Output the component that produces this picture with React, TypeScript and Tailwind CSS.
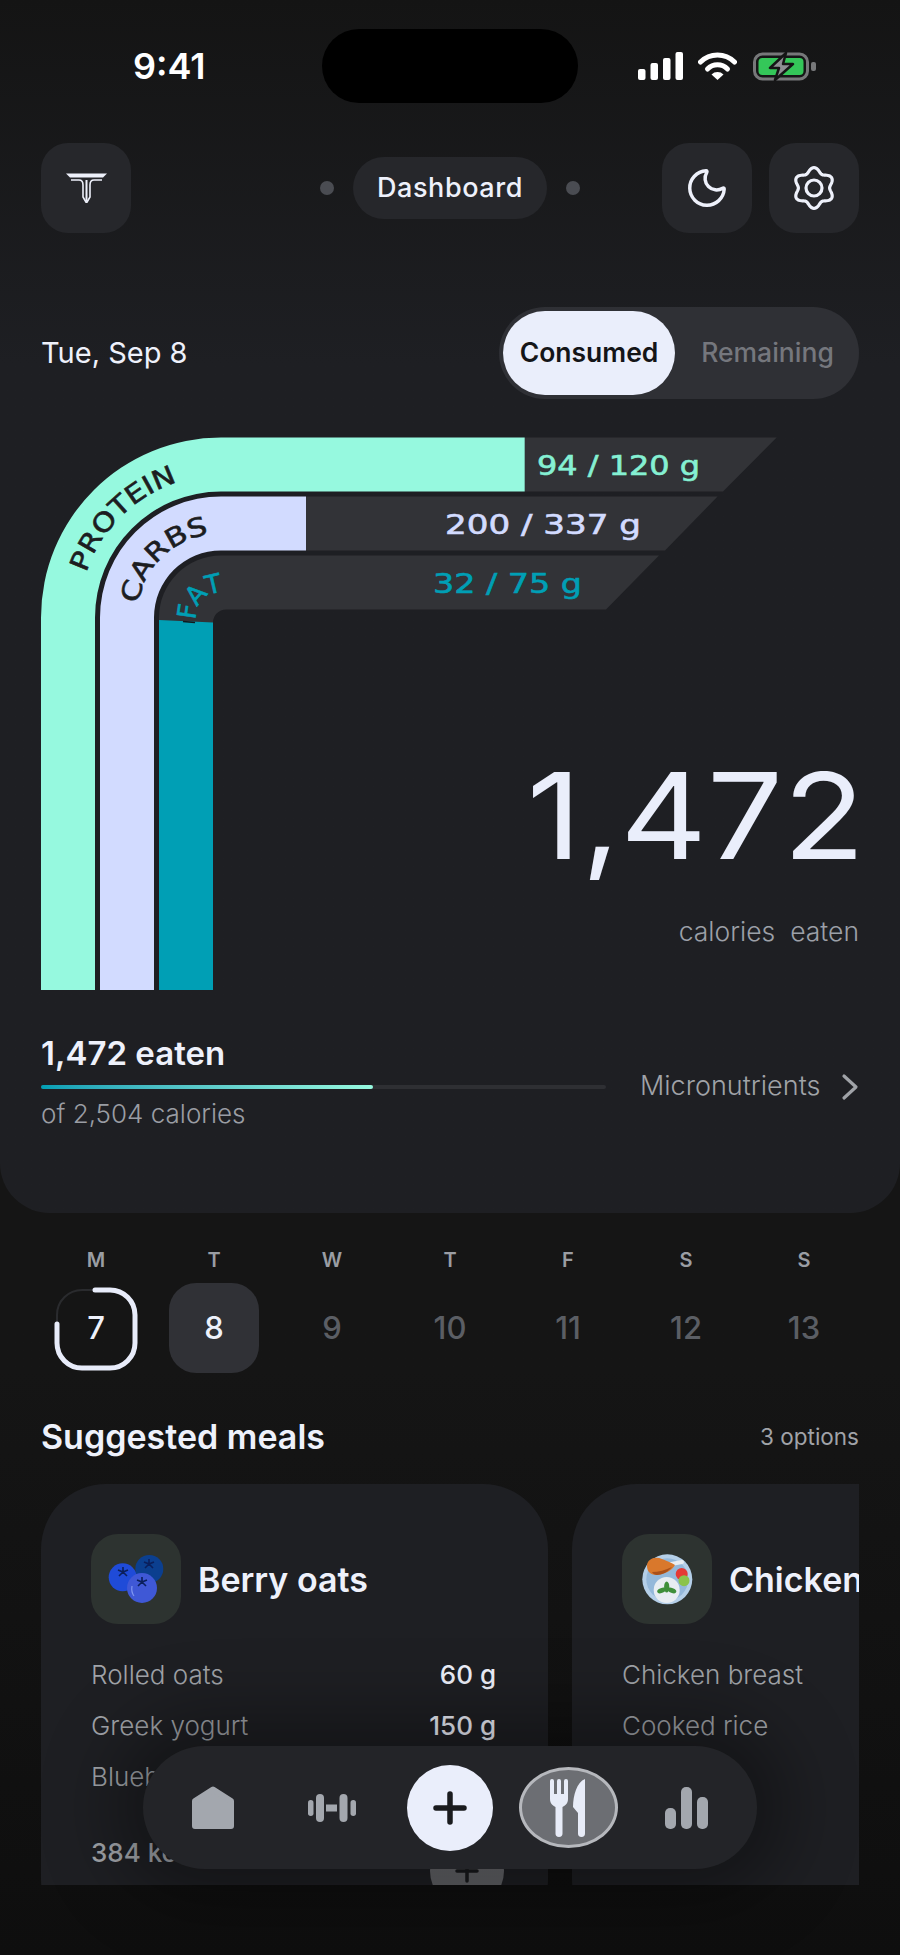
import React from 'react';
import { Moon } from 'lucide-react';

const days = [
  { label: 'M', num: '7' },
  { label: 'T', num: '8' },
  { label: 'W', num: '9' },
  { label: 'T', num: '10' },
  { label: 'F', num: '11' },
  { label: 'S', num: '12' },
  { label: 'S', num: '13' },
];

// six lobed gear outline
const gearPath =
  Array.from({ length: 120 }, (_, i) => {
    const t = (i / 120) * Math.PI * 2;
    const r = 18 + 2.4 * Math.cos(6 * t);
    return `${i === 0 ? 'M' : 'L'}${(22 + r * Math.sin(t)).toFixed(2)} ${(22 - r * Math.cos(t)).toFixed(2)}`;
  }).join(' ') + ' Z';

const StatusIcons = () => (
  <div className="flex items-center pl-[60px]">
    <svg width="45" height="28" viewBox="0 0 45 28" fill="#fff">
      <rect x="0" y="17" width="7.5" height="11" rx="2" />
      <rect x="12.5" y="11" width="7.5" height="17" rx="2" />
      <rect x="25" y="6" width="7.5" height="22" rx="2" />
      <rect x="37.5" y="0" width="7.5" height="28" rx="2" />
    </svg>
    <svg className="ml-[15px]" width="39" height="28" viewBox="0 0 39 28" fill="none">
      <path d="M2.5 10 A24 24 0 0 1 36.5 10" stroke="#fff" strokeWidth="5" strokeLinecap="round" />
      <path d="M9.5 17 A14 14 0 0 1 29.5 17" stroke="#fff" strokeWidth="5" strokeLinecap="round" />
      <path d="M19.5 28 L13.5 22.5 A8.5 8.5 0 0 1 25.5 22.5 Z" fill="#fff" />
    </svg>
    <svg className="ml-[16px]" width="64" height="29" viewBox="0 0 64 29" fill="none">
      <rect x="1.5" y="2" width="53" height="25" rx="8" stroke="#77787a" strokeWidth="3" />
      <rect x="5.5" y="6" width="45" height="17" rx="4" fill="#34c759" />
      <rect x="58" y="10" width="5" height="9" rx="2" fill="#77787a" />
      <path d="M33 1 L17 16 H26 L22 28 L40 12 H30 Z" fill="#8e8e93" stroke="#151515" strokeWidth="2.5" strokeLinejoin="round" />
    </svg>
  </div>
);

const Logo = () => (
  <svg width="41" height="30" viewBox="0 0 41 30" fill="none" stroke="#eef1fb" strokeWidth="1.6">
    <path d="M0 0.5H41L37 4.5H4Z" fill="#eef1fb" strokeWidth="0" />
    <path d="M5 7 H13 C16 7 17 9 17 12 V24 L20.5 30 L24 24 V12 C24 9 25 7 28 7 H36" />
    <path d="M20.5 7 V28" strokeWidth="2" />
  </svg>
);

const MacroChart = () => (
  <svg className="absolute left-0 top-0" width="900" height="553" viewBox="0 437 900 553">
    <path d="M524.7 437.5 H776.7 L723 491.5 H524.7Z" fill="#323337" />
    <path d="M41 990 V617.5 A180 180 0 0 1 221 437.5 H524.7 V491.5 H221 A126 126 0 0 0 95 617.5 V990Z" fill="#96f9df" />
    <path d="M306 496.5 H717.6 L665 550.5 H306Z" fill="#323337" />
    <path d="M100 990 V617.5 A121 121 0 0 1 221 496.5 H306 V550.5 H221 A67 67 0 0 0 154 617.5 V990Z" fill="#d2dbff" />
    <path d="M159 621 V617.5 A62 62 0 0 1 221 555.5 H659 L606 609.5 H226 A13 13 0 0 0 213 622.5 V624Z" fill="#323337" />
    <path d="M159 620 L213 622.5 V990 H159Z" fill="#009fb5" />

    <path id="protein-arc" d="M86.3 572.7 A142 142 0 0 1 221 475.5" fill="none" />
    <path id="carbs-arc" d="M138.1 604.1 A84 84 0 0 1 221 533.5" fill="none" />
    <path id="fat-arc" d="M196 620 A25 25 0 0 1 232 595" fill="none" />

    <g className="font-['DejaVu_Sans',sans-serif] text-[26px]" strokeWidth="0.6">
      <text fill="#1c1d21" stroke="#1c1d21">
        <textPath href="#protein-arc" textLength="133" lengthAdjust="spacingAndGlyphs">PROTEIN</textPath>
      </text>
      <text fill="#1c1d21" stroke="#1c1d21">
        <textPath href="#carbs-arc" textLength="106" lengthAdjust="spacingAndGlyphs">CARBS</textPath>
      </text>
      <text fill="#009fb5" stroke="#009fb5">
        <textPath href="#fat-arc" textLength="44" lengthAdjust="spacingAndGlyphs">FAT</textPath>
      </text>
      <text x="537" y="475" fill="#85f0d3" stroke="#85f0d3" textLength="163" lengthAdjust="spacingAndGlyphs">94 / 120 g</text>
      <text x="445" y="534" fill="#d2dbff" stroke="#d2dbff" textLength="196" lengthAdjust="spacingAndGlyphs">200 / 337 g</text>
      <text x="433" y="593" fill="#009fb5" stroke="#009fb5" textLength="149" lengthAdjust="spacingAndGlyphs">32 / 75 g</text>
    </g>
    <path d="M183 621.5 L195 622.5" stroke="#10191d" strokeWidth="1.5" />
  </svg>
);

const DayCell = ({ label, num, index }: { label: string; num: string; index: number }) => (
  <div className="flex flex-col items-center">
    <span className="text-[20px] leading-[24px] font-semibold text-[#9a9da3]">{label}</span>
    <div
      className={`mt-[11px] w-[90px] h-[90px] rounded-[27px] flex items-center justify-center relative text-[31px] font-medium ${
        index === 1 ? 'bg-[#303136] text-[#eef1fb]' : index === 0 ? 'text-[#eef1fb]' : 'text-[#5b5e64]'
      }`}
    >
      {index === 0 && (
        <svg className="absolute left-[3px] top-[4px]" width="84" height="84" viewBox="0 0 84 84" fill="none">
          <path d="M3 37 V28 A25 25 0 0 1 28 3 H41" stroke="#2a2b2e" strokeWidth="2" />
          <path d="M41 3 H56 A25 25 0 0 1 81 28 V56 A25 25 0 0 1 56 81 H28 A25 25 0 0 1 3 56 V37" stroke="#e8ecfa" strokeWidth="5" strokeLinecap="round" />
        </svg>
      )}
      {num}
    </div>
  </div>
);

const BerryIcon = () => (
  <svg width="90" height="90" viewBox="0 0 90 90">
    <circle cx="58.3" cy="35" r="14" fill="#0b3f8f" />
    <path d="M58 30 L53 28 M58 30 L63 28 M58 30 V25 M58 30 L54 34 M58 30 L62 34" stroke="#0a1f5c" strokeWidth="1.6" />
    <circle cx="31.7" cy="43.3" r="14" fill="#1f4bd8" />
    <path d="M32 38 L27 36 M32 38 L37 36 M32 38 V33 M32 38 L28 42 M32 38 L36 42" stroke="#0a1f5c" strokeWidth="1.6" />
    <circle cx="51" cy="54" r="15" fill="#3f58d6" />
    <path d="M51 48 L46 46 M51 48 L56 46 M51 48 V43 M51 48 L47 52 M51 48 L55 52" stroke="#0a1f5c" strokeWidth="1.6" />
    <path d="M41 52 Q40 58 43 62" stroke="#7f96f0" strokeWidth="1.2" fill="none" />
  </svg>
);

const PlateIcon = () => (
  <svg width="90" height="90" viewBox="0 0 90 90">
    <circle cx="45.3" cy="45.3" r="25" fill="#b4cfe8" />
    <circle cx="45.3" cy="45.3" r="21" fill="#94b8da" />
    <path d="M44 31 L60 28" stroke="#e8edf2" strokeWidth="4" strokeLinecap="round" />
    <path d="M25 32 C25 25 33 22 40 25 C45 27 50 29 53 31 C50 37 42 40 35 41 C29 41 25 38 25 32Z" fill="#d9782c" />
    <path d="M30 38 C36 38 44 36 50 33 C46 38 40 41 35 41 C33 41 31 40 30 38Z" fill="#a9501a" />
    <circle cx="59.7" cy="40" r="6" fill="#e53935" />
    <circle cx="62" cy="46.7" r="5.5" fill="#8bc34a" />
    <circle cx="44.7" cy="56" r="13" fill="#e8edf2" />
    <ellipse cx="44.7" cy="53" rx="2.6" ry="5.5" fill="#3f8f3a" />
    <ellipse cx="39.5" cy="56.5" rx="4.5" ry="2.4" transform="rotate(-20 39.5 56.5)" fill="#3f8f3a" />
    <ellipse cx="50" cy="56.5" rx="4.5" ry="2.4" transform="rotate(20 50 56.5)" fill="#3f8f3a" />
  </svg>
);

const MealCard = ({
  title,
  icon,
  rows,
  kcal,
}: {
  title: string;
  icon: React.ReactNode;
  rows: [string, string][];
  kcal: string;
}) => (
  <div className="w-[507px] h-[460px] shrink-0 rounded-[65px] bg-[#1e1f23] pt-[50px] pl-[50px] pr-[52px]">
    <div className="flex items-center gap-[17px]">
      <div className="w-[90px] h-[90px] rounded-[27px] bg-[#2d3330]">{icon}</div>
      <span className="text-[34px] font-semibold text-[#eef1fb] whitespace-nowrap">{title}</span>
    </div>
    <div className="mt-[25px]">
      {rows.map(([name, amount]) => (
        <div key={name} className="flex justify-between items-center h-[51px] text-[26px]">
          <span className="text-[#a0a3a8] font-light">{name}</span>
          <span className="font-medium text-[#eef1fb]">{amount}</span>
        </div>
      ))}
    </div>
    <div className="mt-[32px] flex justify-between items-start">
      <span className="text-[26px] leading-[38px] font-medium text-[#a0a3a8]">{kcal}</span>
      <div className="-mr-[8px] w-[74px] h-[74px] rounded-full bg-gradient-to-b from-[#7a7b7f] to-[#55565a] flex items-center justify-center">
        <svg width="24" height="24" viewBox="0 0 24 24" stroke="#1a1b1e" strokeWidth="3.5" strokeLinecap="round">
          <path d="M2 12 H22 M12 2 V22" />
        </svg>
      </div>
    </div>
  </div>
);

const BottomNav = () => (
  <div className="absolute left-[143px] top-[1746px] w-[614px] h-[123px] rounded-full bg-[#232428] shadow-[0_0_70px_30px_rgba(0,0,0,0.35)] grid grid-cols-5 px-[11px] items-center justify-items-center">
    <svg width="42" height="43" viewBox="0 0 42 43" fill="#a3a7ae" stroke="#a3a7ae" strokeWidth="6" strokeLinejoin="round">
      <path d="M21 3.5 L39 15 V40 H3 V15 Z" />
    </svg>
    <svg width="48" height="28" viewBox="0 0 48 28" fill="#a3a7ae">
      <rect x="0" y="6" width="5.5" height="16" rx="2.7" />
      <rect x="8" y="0" width="8" height="28" rx="4" />
      <rect x="18" y="10.5" width="11" height="7" />
      <rect x="31.5" y="0" width="8" height="28" rx="4" />
      <rect x="42.5" y="6" width="5.5" height="16" rx="2.7" />
    </svg>
    <div className="w-[86px] h-[86px] rounded-full bg-[#eaeefb] flex items-center justify-center">
      <svg width="34" height="34" viewBox="0 0 34 34" stroke="#1a1b1e" strokeWidth="5.5" strokeLinecap="round">
        <path d="M3 17 H31 M17 3 V31" />
      </svg>
    </div>
    <div className="w-[99px] h-[81px] rounded-[50%] bg-[#6c6e73] border-[3px] border-[#b6b8bd] flex items-center justify-center">
      <svg width="36" height="58" viewBox="0 0 36 58" fill="#e8ecf8">
        <rect x="0" y="0" width="4" height="20" rx="2" />
        <rect x="7" y="0" width="4" height="20" rx="2" />
        <rect x="14" y="0" width="4" height="20" rx="2" />
        <path d="M0 15 H18 V20 C18 25 14.5 27 12.5 28 V54.5 a3.5 3.5 0 0 1 -7 0 V28 C3.5 27 0 25 0 20Z" />
        <path d="M35 0 C27 3 23 16 23 28 L28 34 V54.5 a3.5 3.5 0 0 0 7 0 Z" />
      </svg>
    </div>
    <svg width="43" height="42" viewBox="0 0 43 42" fill="#a3a7ae">
      <rect x="0" y="21" width="11" height="21" rx="5" />
      <rect x="16" y="0" width="11" height="42" rx="5" />
      <rect x="32" y="10" width="11" height="32" rx="5" />
    </svg>
  </div>
);

const App: React.FC = () => {
  return (
    <div className="relative w-[900px] h-[1955px] overflow-hidden bg-gradient-to-b from-[#151515] from-70% to-[#0e0e0e] font-['Inter',sans-serif]">
      {/* Top panel */}
      <section className="h-[1213px] rounded-b-[50px] bg-gradient-to-b from-[#141414] to-[#1e1f23] to-30%">
        {/* Status bar */}
        <div className="flex items-center pt-[29px]">
          <div className="w-[322px] pl-[133px] text-[36px] font-semibold text-white">9:41</div>
          <div className="w-[256px] h-[74px] rounded-full bg-black" />
          <StatusIcons />
        </div>

        {/* Header */}
        <header className="mt-[40px] px-[41px] flex items-center">
          <div className="w-[90px] h-[90px] rounded-[27px] bg-[#26272b] flex items-center justify-center">
            <Logo />
          </div>
          <div className="ml-[189px] w-[14px] h-[14px] rounded-full bg-[#4a4c52]" />
          <div className="ml-[19px] w-[194px] h-[62px] rounded-full bg-[#26272b] flex items-center justify-center text-[27px] tracking-[0.6px] font-medium text-[#eef1fb]">
            Dashboard
          </div>
          <div className="ml-[19px] w-[14px] h-[14px] rounded-full bg-[#4a4c52]" />
          <div className="ml-auto flex gap-[17px]">
            <div className="w-[90px] h-[90px] rounded-[27px] bg-[#26272b] flex items-center justify-center">
              <Moon size={46} strokeWidth={1.8} className="text-[#eef1fb]" />
            </div>
            <div className="w-[90px] h-[90px] rounded-[27px] bg-[#26272b] flex items-center justify-center">
              <svg width="44" height="44" viewBox="0 0 44 44" fill="none" stroke="#eef1fb" strokeWidth="3.2">
                <path d={gearPath} strokeLinejoin="round" />
                <circle cx="22" cy="22" r="8" />
              </svg>
            </div>
          </div>
        </header>

        {/* Date and toggle */}
        <div className="mt-[74px] px-[41px] flex items-center justify-between">
          <span className="text-[29px] text-[#eef1fb]">Tue, Sep 8</span>
          <div className="w-[360px] h-[92px] rounded-full bg-[#2f3035] flex items-center p-[4px]">
            <div className="w-[172px] h-[84px] rounded-full bg-[#eaeefb] flex items-center justify-center text-[26.5px] font-semibold text-[#141518]">
              Consumed
            </div>
            <div className="flex-1 pl-[5px] text-center text-[26.5px] font-medium text-[#75777d]">Remaining</div>
          </div>
        </div>

        {/* Macro chart */}
        <div className="relative mt-[38px] h-[553px] px-[41px] flex flex-col items-end">
          <MacroChart />
          <div className="relative -mr-[6px] mt-[319px] origin-right scale-x-[1.12] text-[120px] leading-[120px] font-normal text-[#eaeefb]">1,472</div>
          <div className="relative mt-[36px] text-[26.5px] font-light text-[#9ca0a8] whitespace-pre">calories  eaten</div>
        </div>

        {/* Eaten progress */}
        <div className="mt-[43px] px-[41px] flex items-center">
          <div className="w-[565px]">
            <div className="text-[33px] leading-[40px] font-semibold text-[#eef1fb]">1,472 eaten</div>
            <div className="mt-[12px] h-[4px] rounded-full bg-[#2e2f33]">
              <div className="h-full rounded-full bg-gradient-to-r from-[#009fb5] to-[#96f9df]" style={{ width: `${(332 / 565) * 100}%` }} />
            </div>
            <div className="mt-[9px] text-[26px] leading-[32px] font-light text-[#9a9da3]">of 2,504 calories</div>
          </div>
          <div className="ml-[34px] pt-[10px] text-[27px] font-light text-[#a0a3a8]">Micronutrients</div>
          <svg className="ml-auto mt-[10px]" width="18" height="28" viewBox="0 0 18 28" fill="none" stroke="#a0a3a8" strokeWidth="3.2" strokeLinecap="round" strokeLinejoin="round">
            <path d="M3 3 L15 14 L3 25" />
          </svg>
        </div>
      </section>

      {/* Week strip */}
      <div className="mt-[35px] px-[37px] grid grid-cols-7">
        {days.map((d, i) => (
          <DayCell key={i} label={d.label} num={d.num} index={i} />
        ))}
      </div>

      {/* Suggested meals */}
      <div className="mt-[44px] px-[41px] flex items-center justify-between">
        <h2 className="text-[34px] leading-[40px] font-semibold text-[#eef1fb]">Suggested meals</h2>
        <span className="text-[22.5px] text-[#a0a3a8]">3 options</span>
      </div>
      <div className="mt-[27px] mx-[41px] h-[401px] overflow-hidden flex gap-[24px]">
        <MealCard
          title="Berry oats"
          icon={<BerryIcon />}
          rows={[
            ['Rolled oats', '60 g'],
            ['Greek yogurt', '150 g'],
            ['Blueberries', '80 g'],
          ]}
          kcal="384 kcal"
        />
        <MealCard
          title="Chicken rice"
          icon={<PlateIcon />}
          rows={[
            ['Chicken breast', '150 g'],
            ['Cooked rice', '180 g'],
            ['Broccoli', '90 g'],
          ]}
          kcal="512 kcal"
        />
      </div>

      <BottomNav />
    </div>
  );
};

export default App;
